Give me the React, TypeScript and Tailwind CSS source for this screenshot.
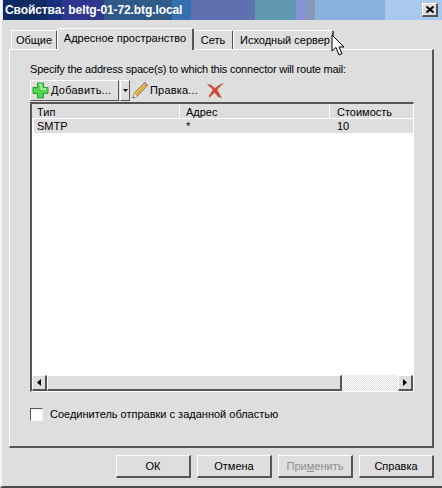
import { useState } from 'react';

const font = "[font-family:'Liberation_Sans',Arial,sans-serif]";

const titleBands = [
    { width: 44, color: '#0f2b63' },
    { width: 15, color: '#1a2f7c' },
    { width: 42, color: '#2f3690' },
    { width: 68, color: '#2f5a88' },
    { width: 19, color: '#3570b0' },
    { width: 64, color: '#5f70b0' },
    { width: 41, color: '#6098b0' },
    { width: 9, color: '#8890d8' },
    { width: 10, color: '#8898b8' },
    { width: 70, color: '#8ab0de' },
];

const raised = 'border border-t-white border-l-white border-r-[#555555] border-b-[#555555]';

function Tab({ label, active, className }: { label: string; active?: boolean; className: string }) {
    return (
        <div
            className={`flex items-center justify-center border-t border-l border-r-2 border-t-white border-l-white border-r-[#555555] border-b-0 rounded-t-[2px] ${
                active ? 'h-[22px] relative z-10 -mb-px -mr-px bg-[#dedede]' : 'h-[19px] -mr-px'
            } ${className}`}
        >
            {label}
        </div>
    );
}

function Button({ label, disabled }: { label: React.ReactNode; disabled?: boolean }) {
    return (
        <button className={`w-[75px] h-[23px] flex items-center justify-center bg-[#dedede] ${raised} border-b-2 border-r-2 ${disabled ? 'text-[#8f8f8f]' : 'text-black'}`}>
            {label}
        </button>
    );
}

function PlusIcon() {
    return (
        <svg width="17" height="17" viewBox="0 0 17 17">
            <path d="M5.5 1h6v4.5H16v6h-4.5V16h-6v-4.5H1v-6h4.5z" fill="#4fd64f" stroke="#2f9a34" strokeWidth="1" />
            <path d="M7 2.5h2V7h5" fill="none" stroke="#b5f2a8" strokeWidth="1.4" />
        </svg>
    );
}

function PencilIcon() {
    return (
        <svg width="17" height="18" viewBox="0 0 17 18">
            <path d="M1 17l1-4.5L12.8 1.4l3 2.8L5 15.4z" fill="#eec04e" stroke="#6f6238" strokeWidth="0.8" />
            <path d="M4 14l9.8-10.4" fill="none" stroke="#c98f2c" strokeWidth="0.9" />
            <path d="M1 17l1-4.5 3 2.9z" fill="#efe3c6" />
            <path d="M1 17l.4-1.8 1.4 1.2z" fill="#333333" />
            <path d="M11.6 2.6l3 2.8 1.2-1.2-3-2.8z" fill="#c98a8a" />
        </svg>
    );
}

function DeleteIcon() {
    return (
        <svg width="17" height="15" viewBox="0 0 17 15">
            <path d="M0.5 1.5C3.5 1 5.5 3 8 5.5 10.5 3.2 13 1 16.5 0.5 13.5 2.5 11.5 5 10 7 11.5 9.5 13 12 14.5 14.5L11.5 14C10 12.5 9 11 7.5 9.5 5.5 11.5 4 13 2.5 14.5L2 13C3.5 11 4.5 9 6 7 4 4.5 2.5 3 0.5 1.5z" fill="#d8432a" stroke="#a86a5e" strokeWidth="0.5" />
        </svg>
    );
}

function Cursor() {
    return (
        <svg className="absolute left-[329px] top-[34px] z-20" width="13" height="24" viewBox="0 0 13 24">
            <path d="M1 1v16l4-3.6L8 21l3-1.4-3-6.6h5z" fill="#ffffff" stroke="#000000" strokeWidth="1" />
        </svg>
    );
}

function ScrollArrow({ dir }: { dir: 'left' | 'right' }) {
    return (
        <div className={`w-[15px] h-full flex items-center justify-center bg-[#dedede] ${raised} border-b-2 border-r-2`}>
            <svg width="5" height="7" viewBox="0 0 5 7">
                <path d={dir === 'left' ? 'M4 0v7L0 3.5z' : 'M0 0v7l4-3.5z'} fill="#000000" />
            </svg>
        </div>
    );
}

export default function App() {
    const [scoped, setScoped] = useState(false);

    return (
        <div className={`relative w-[442px] h-[488px] overflow-hidden flex flex-col bg-[#dedede] text-[11px] leading-[13px] text-black border-l-2 border-l-[#f4f4f4] border-b-2 border-b-[#4a4a4a] ${font}`}>
            {/* Title bar */}
            <div className="relative ml-px h-[20px] flex shrink-0">
                {titleBands.map((band, i) => (
                    <div key={i} className="h-full" style={{ width: `${band.width}px`, backgroundColor: band.color }} />
                ))}
                <div className="flex-1 bg-[#a8c8ee]" />
                <span className="absolute left-[2px] top-[3px] text-[12px] leading-[15px] tracking-[-0.1px] font-bold text-white">Свойства: beltg-01-72.btg.local</span>
                <div className={`absolute left-[419px] top-[3px] w-[16px] h-[14px] flex items-center justify-center bg-[#dedede] ${raised} border-b-2 border-r-2`}>
                    <svg width="8" height="7" viewBox="0 0 8 7">
                        <path d="M0.5 0.5L7.5 6.5M7.5 0.5L0.5 6.5" stroke="#000000" strokeWidth="2" />
                    </svg>
                </div>
            </div>

            {/* Tabs */}
            <div className="flex items-end h-[29px] pl-[9px] shrink-0">
                <Tab label="Общие" className="w-[47px]" />
                <Tab label="Адресное пространство" active className="w-[137px] pb-[3px]" />
                <Tab label="Сеть" className="w-[41px]" />
                <Tab label="Исходный сервер" className="w-[101px] justify-start pl-[6px]" />
            </div>

            {/* Tab panel */}
            <div className="ml-[7px] mr-[8px] h-[399px] shrink-0 flex flex-col pl-[20px] pr-[18px] pt-[13px] border-t border-l border-t-white border-l-white border-r-2 border-r-[#555555] border-b-2 border-b-[#555555]">
                <p className="h-[14px] tracking-[-0.2px]">Specify the address space(s) to which this connector will route mail:</p>

                {/* Toolbar */}
                <div className="mt-px h-[24px] flex items-center shrink-0">
                    <div className={`w-[89px] h-[21px] flex items-center gap-[2px] pl-[1px] ${raised}`}>
                        <PlusIcon />
                        <span className="tracking-[0.25px]">Добавить...</span>
                    </div>
                    <div className={`ml-[1px] w-[10px] h-[21px] flex items-center justify-center ${raised}`}>
                        <svg width="5" height="3" viewBox="0 0 5 3">
                            <path d="M0 0h5L2.5 3z" fill="#000000" />
                        </svg>
                    </div>
                    <div className="ml-[2px] flex items-center gap-[1px]">
                        <PencilIcon />
                        <span className="tracking-[0.2px]">Правка...</span>
                    </div>
                    <div className="ml-[9px]">
                        <DeleteIcon />
                    </div>
                </div>

                {/* Address list */}
                <div className="h-[290px] flex flex-col shrink-0 border-t-2 border-l-2 border-t-[#555555] border-l-[#555555] border-r border-b border-r-white border-b-white bg-white">
                    <div className="flex h-[15px] shrink-0 bg-[#dedede] border-b border-b-white">
                        <div className="w-[148px] pl-[5px] pt-[2px] border-r border-r-white">Тип</div>
                        <div className="w-[150px] pl-[6px] pt-[2px] border-r border-r-white">Адрес</div>
                        <div className="flex-1 pl-[7px] pt-[2px]">Стоимость</div>
                    </div>
                    <div className="flex h-[14px] pt-px shrink-0 bg-[#dedede] ml-[2px]">
                        <div className="w-[146px] pl-[3px]">SMTP</div>
                        <div className="w-[150px] pl-[6px]">*</div>
                        <div className="flex-1 pl-[7px]">10</div>
                    </div>
                    <div className="flex-1" />
                    <div className="flex h-[16px] shrink-0 bg-[#dedede]">
                        <ScrollArrow dir="left" />
                        <div className={`w-[295px] bg-[#dedede] ${raised} border-b-2 border-r-2`} />
                        <div className="flex-1 bg-[repeating-conic-gradient(#ffffff_0_25%,#dedede_0_50%)] bg-[length:2px_2px]" />
                        <ScrollArrow dir="right" />
                    </div>
                </div>

                {/* Scope option */}
                <label className="mt-[16px] h-[13px] flex items-center gap-[7px]">
                    <input
                        type="checkbox"
                        checked={scoped}
                        onChange={(e) => setScoped(e.target.checked)}
                        className="appearance-none w-[13px] h-[13px] bg-white border border-t-[#555555] border-l-[#555555] border-r-[#f4f4f4] border-b-[#f4f4f4]"
                    />
                    <span>Соединитель отправки с заданной областью</span>
                </label>
            </div>

            {/* Dialog buttons */}
            <div className="mt-[7px] pl-[114px] flex gap-[6px]">
                <Button label="ОК" />
                <Button label="Отмена" />
                <Button label={<span>При<span className="underline">м</span>енить</span>} disabled />
                <Button label="Справка" />
            </div>

            <Cursor />
        </div>
    );
}
